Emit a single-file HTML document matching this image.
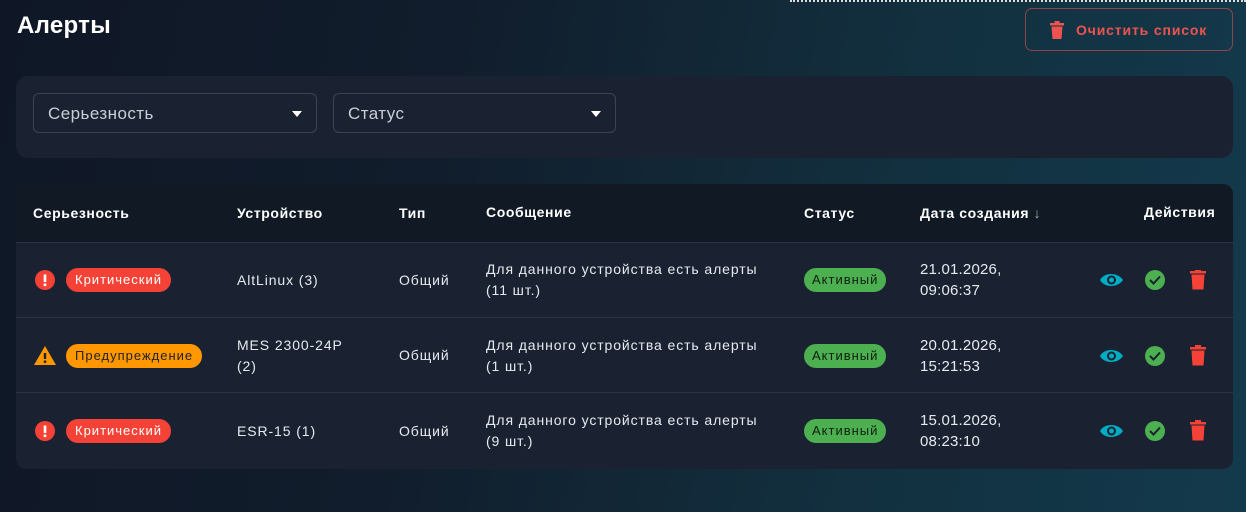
<!DOCTYPE html>
<html><head><meta charset="utf-8"><style>
*{margin:0;padding:0;box-sizing:border-box}
body{width:1246px;height:512px;overflow:hidden;font-family:"Liberation Sans","DejaVu Sans",sans-serif;color:#e6e9ee;
background:linear-gradient(100deg,#0f1726 0%,#111d2c 35%,#12303f 70%,#133a4c 100%);position:relative}
.abs{position:absolute}
h1{position:absolute;left:17px;top:12px;font-size:24px;font-weight:bold;color:#fff;letter-spacing:0.3px}
.btn{left:1025px;top:8px;width:208px;height:43px;border:1px solid rgba(239,83,80,.55);border-radius:7px;color:#ef5350;font-weight:bold;font-size:14px;letter-spacing:0.85px;display:flex;align-items:center;padding-left:24px;gap:12px}
.card{left:16px;top:76px;width:1217px;height:82px;background:#1a2232;border-radius:12px}
.sel{top:93px;height:40px;border:1px solid #3a4457;border-radius:6px;font-size:17px;letter-spacing:0.45px;color:#c9ced6;padding:10px 14px}
.sel:after{content:"";position:absolute;right:14px;top:17px;border-left:5px solid transparent;border-right:5px solid transparent;border-top:6px solid #fff}
.tbl{left:16px;top:184px;width:1217px;height:285px;background:#1a2232;border-radius:10px;overflow:hidden}
.hd{left:0;top:0;width:100%;height:59px;background:#111a24;border-bottom:1px solid #2b3444}
.th{top:21px;font-size:14px;font-weight:bold;color:#fff;letter-spacing:0.6px}
.row{left:0;width:100%;height:75px;border-bottom:1px solid #2a3343}
.c{font-size:14px;color:#e6e9ee;line-height:21px;letter-spacing:0.9px}
.pill{height:24px;border-radius:12px;font-size:13px;line-height:24px;padding:0 9px;letter-spacing:1px}
.crit{background:#f44336;color:#fff}
.warn{background:#ff9800;color:#222}
.act{background:#4caf50;color:#102010;padding:0 8px}
</style></head><body>
<div class="abs" style="left:790px;top:0;width:456px;height:2px;border-top:2px dotted #ddd"></div>
<h1>Алерты</h1>
<div class="abs btn"><svg width="14" height="18" viewBox="0 0 14 18"><rect x="0" y="2" width="14" height="2.5" fill="#ef5350"/><rect x="4.5" y="0" width="5" height="3" fill="#ef5350"/><path d="M1.5 5.5h11l-1 12.5h-9z" fill="#ef5350"/></svg>Очистить список</div>
<div class="abs card"></div>
<div class="abs sel" style="left:33px;width:284px">Серьезность</div>
<div class="abs sel" style="left:333px;width:283px">Статус</div>
<div class="abs tbl">
 <div class="abs hd"></div>
 <div class="abs th" style="left:17px">Серьезность</div>
 <div class="abs th" style="left:221px">Устройство</div>
 <div class="abs th" style="left:383px">Тип</div>
 <div class="abs th" style="left:470px;top:20px">Сообщение</div>
 <div class="abs th" style="left:788px">Статус</div>
 <div class="abs th" style="left:904px">Дата создания <span style="font-weight:normal;color:#aaa">↓</span></div>
 <div class="abs th" style="left:1128px;top:20px">Действия</div>
 <div class="abs row" style="top:59px"></div>
 <div class="abs row" style="top:134px"></div>
 <div class="abs row" style="top:209px;border:none"></div>
</div>

<svg class="abs" style="left:35px;top:270px" width="20" height="20"><circle cx="10" cy="10" r="10" fill="#f44336"/><rect x="8.7" y="4.5" width="2.6" height="7.5" fill="#fff"/><rect x="8.7" y="13.5" width="2.6" height="2.6" fill="#fff"/></svg>
<div class="abs pill crit" style="left:66px;top:268px">Критический</div>
<div class="abs c" style="left:237px;top:270px">AltLinux (3)</div>
<div class="abs c" style="left:399px;top:270px">Общий</div>
<div class="abs c" style="left:486px;top:259px">Для данного устройства есть алерты<br>(11 шт.)</div>
<div class="abs pill act" style="left:804px;top:268px">Активный</div>
<div class="abs c" style="left:920px;top:259px;font-size:15px;letter-spacing:0.2px">21.01.2026,<br>09:06:37</div>

<svg class="abs" style="left:33px;top:345px" width="24" height="21"><path d="M12 1L23 20H1z" fill="#ff9800"/><rect x="10.8" y="8" width="2.4" height="6" fill="#1a2232"/><rect x="10.8" y="15.5" width="2.4" height="2.4" fill="#1a2232"/></svg>
<div class="abs pill warn" style="left:66px;top:344px">Предупреждение</div>
<div class="abs c" style="left:237px;top:335px">MES 2300-24P<br>(2)</div>
<div class="abs c" style="left:399px;top:345px">Общий</div>
<div class="abs c" style="left:486px;top:335px">Для данного устройства есть алерты<br>(1 шт.)</div>
<div class="abs pill act" style="left:804px;top:344px">Активный</div>
<div class="abs c" style="left:920px;top:335px;font-size:15px;letter-spacing:0.2px">20.01.2026,<br>15:21:53</div>

<svg class="abs" style="left:35px;top:421px" width="20" height="20"><circle cx="10" cy="10" r="10" fill="#f44336"/><rect x="8.7" y="4.5" width="2.6" height="7.5" fill="#fff"/><rect x="8.7" y="13.5" width="2.6" height="2.6" fill="#fff"/></svg>
<div class="abs pill crit" style="left:66px;top:419px">Критический</div>
<div class="abs c" style="left:237px;top:421px">ESR-15 (1)</div>
<div class="abs c" style="left:399px;top:421px">Общий</div>
<div class="abs c" style="left:486px;top:410px">Для данного устройства есть алерты<br>(9 шт.)</div>
<div class="abs pill act" style="left:804px;top:419px">Активный</div>
<div class="abs c" style="left:920px;top:410px;font-size:15px;letter-spacing:0.2px">15.01.2026,<br>08:23:10</div>

<svg class="abs" style="left:1100px;top:270px" width="200" height="180">
 <defs>
  <g id="a">
   <path d="M0 10C4 2 18 2 23 10C18 18 4 18 0 10Z" fill="#00acc1"/><circle cx="11.5" cy="10" r="4.5" fill="#1a2232"/><circle cx="11.5" cy="10" r="2.5" fill="#00acc1"/>
   <circle cx="55" cy="10" r="10" fill="#4caf50"/><path d="M50 10l3.5 3.5 6.5-7" stroke="#1a2232" stroke-width="2" fill="none"/>
   <rect x="90" y="1" width="16" height="2.5" fill="#f44336"/><rect x="95" y="-1" width="6" height="3" fill="#f44336"/><path d="M91.5 4.5h13l-1 15h-11z" fill="#f44336"/>
  </g>
 </defs>
 <use href="#a" x="0" y="0"/>
 <use href="#a" x="0" y="76"/>
 <use href="#a" x="0" y="151"/>
</svg>
</body></html>
